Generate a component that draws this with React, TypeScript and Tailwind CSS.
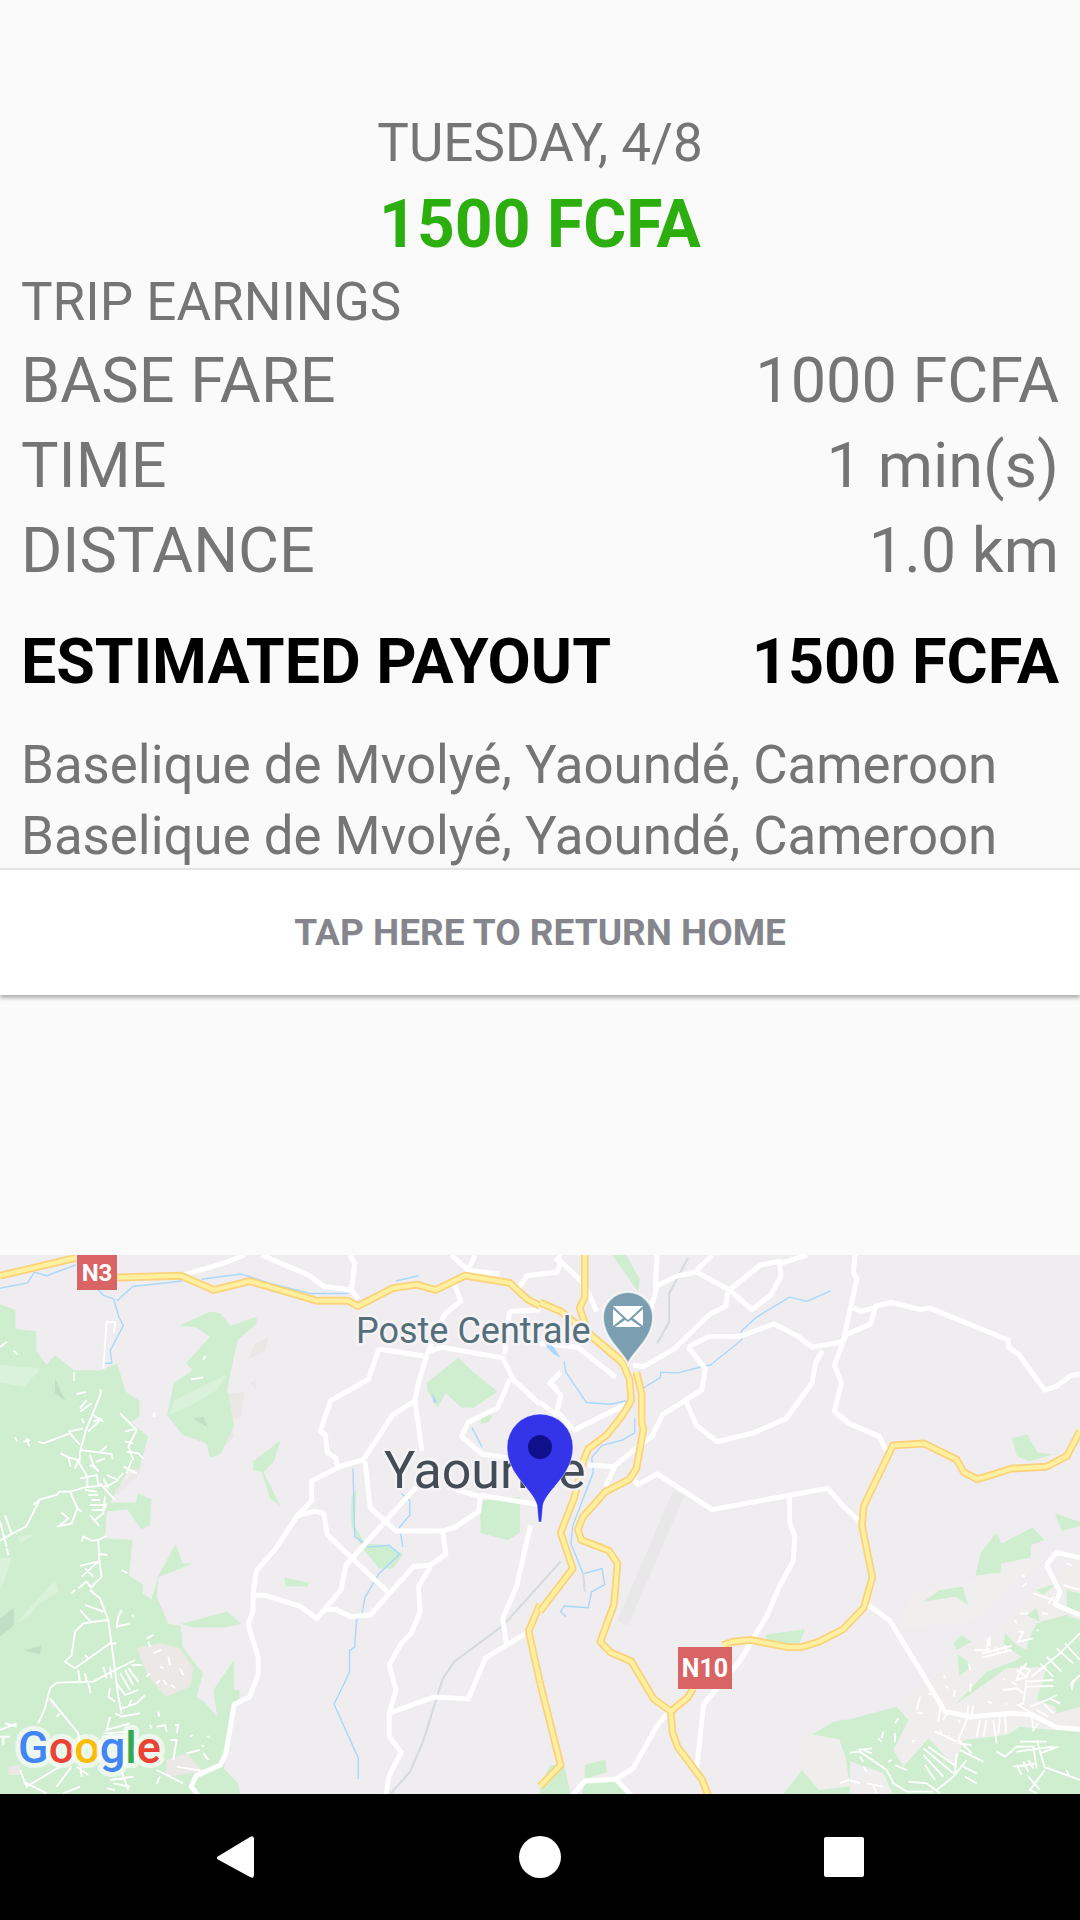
const leftGreen = [
  "M0,180 L45,195 L45,250 L105,255 L105,310 L135,350 L160,322 L215,365 L295,365 L340,345 L365,425 L405,450 L405,495 L380,510 L430,550 L405,640 L370,650 L320,735 L395,735 L400,710 L440,725 L435,800 L410,810 L370,755 L310,760 L305,835 L385,840 L375,940 L415,965 L415,990 L440,1005 L460,940 L510,850 L530,905 L560,905 L460,945 L455,1000 L490,1075 L525,1080 L530,1140 L590,1215 L570,1280 L590,1290 L630,1335 L680,1290 L650,1480 L690,1520 L700,1560 L0,1560 Z",
  "M520,240 L610,200 L640,205 L670,240 L745,215 L745,235 L690,280 L670,370 L660,420 L680,520 L640,600 L610,610 L600,570 L530,545 L485,490 L505,400 L560,365 L540,345 L610,270 L570,245 Z",
  "M735,620 L815,560 L795,620 L765,650 L815,745 L785,725 L760,650 L735,645 Z",
  "M825,945 L895,960 L895,970 L830,970 Z",
  "M525,1075 L660,1040 L700,1075 L650,1085 L560,1085 Z",
  "M620,1260 L680,1175 L680,1260 L695,1260 L695,1285 L630,1335 Z",
  "M1240,400 L1330,330 L1375,370 L1445,425 L1375,470 L1340,470 L1295,430 L1270,470 L1240,420 Z",
  "M1395,730 L1510,720 L1510,820 L1475,840 L1450,835 L1395,820 Z",
  "M1020,720 L1035,700 L1030,800 L1060,850 L1130,855 L1170,880 L1140,920 L1100,920 L1050,860 L1020,800 Z",
  "M1400,490 L1430,490 L1420,510 L1395,515 Z",
]
const leftBeige = [
  "M660,430 L710,425 L700,495 L650,510 Z",
  "M590,500 L670,520 L680,550 L640,585 L530,545 Z",
  "M740,290 L780,270 L770,310 L720,335 Z",
  "M725,400 L743,390 L743,420 Z",
]
const leftDark = [
  "M0,1060 L40,1030 L40,1080 L0,1110 Z",
  "M160,390 L190,450 L160,430 Z",
  "M70,1150 L120,1135 L115,1160 Z",
  "M560,500 L590,495 L605,525 Z",
]
const leftLight = [
  "M490,490 L505,450 L660,375 L630,420 L560,460 Z",
  "M0,350 L120,360 L70,410 L0,400 Z",
  "M50,1070 L160,950 L170,985 L110,1020 L80,1060 Z",
  "M0,890 L35,890 L10,960 L0,970 Z",
  "M50,830 L100,825 L60,850 Z",
]
const leftYellow = [
  "M0,100 L220,50",
  "M340,105 L525,100 L620,140 L725,115 L920,170 L1010,170 L1040,185 L1140,135 L1210,125 L1265,140 L1350,100 L1480,120 L1530,165 L1568,185",
  "M1568,1020 L1535,1095 L1568,1240",
]
const leftWhite = [
  "M525,100 L650,65 L710,42",
  "M760,42 L900,100 L940,130 L1020,140 L1040,165",
  "M1015,42 L1030,65 L1020,140",
  "M1310,42 L1360,85 L1450,95",
  "M1380,42 L1355,90",
  "M1505,135 L1530,100 L1568,95",
  "M1320,125 L1338,170 L1290,210 L1240,320 L1215,400 L1205,450 L1140,490 L1055,615 L985,635 L905,675 L905,730 L865,770 L800,865 L745,925 L735,990 L735,1040 L720,1075 L750,1170 L750,1215 L725,1280 L680,1300 L655,1440 L640,1470 L570,1500 L555,1530 L575,1555",
  "M1480,200 L1465,320",
  "M1480,200 L1568,195",
  "M1100,305 L1230,325",
  "M1100,305 L1070,390 L960,450 L930,535 L945,545 L950,595 L975,610 L980,635",
  "M1240,315 L1280,300 L1460,330 L1490,390 L1568,460",
  "M1480,390 L1445,470 L1360,510 L1340,550 L1400,600 L1470,610",
  "M1205,450 L1225,590",
  "M1060,620 L1075,750 L1150,815 L1285,815 L1295,880 L1250,910 L1200,915 L1075,1050 L1020,1055 L975,1035 L940,1035",
  "M1285,815 L1320,805 L1390,760 L1395,720 L1300,690",
  "M1395,715 L1560,740",
  "M1210,690 L1005,910 L990,980 L920,1060 L870,1025 L770,995 L735,995",
  "M865,770 L915,760 L940,765 L950,825 L1125,985",
  "M1250,915 L1215,970 L1220,1040 L1195,1100 L1165,1130 L1130,1190 L1150,1260 L1130,1325 L1130,1390 L1165,1435 L1130,1500 L1120,1555",
  "M1130,1325 L1260,1280 L1360,1285 L1410,1170 L1530,1100",
  "M1540,800 L1500,970 L1460,1060 L1470,1130",
]
const leftThin = [
  "M310,230 L335,230 L330,260 M310,225 L300,360",
  "M555,390 L590,385 M590,335 L597,325 M215,370 L215,395 M445,485 L450,495",
  "M0,300 L20,285 M40,310 L50,320",
]
const leftBlue = [
  "M0,135 L80,120 L100,90 L135,100 L220,70",
  "M285,140 L300,155 L330,165 L345,215 L358,240 L320,310 L325,345 L305,345",
  "M340,170 L385,130 L530,115",
  "M585,110 L700,95 L780,120 L900,150 L1010,150",
  "M1150,115 L1215,100",
  "M1025,640 L1030,830 L1070,860 L1130,855 L1160,880 L1100,935 L1060,1000 L1050,1050 L1035,1065 L1030,1140 L1015,1150 L1015,1210 L970,1300 L1040,1450 L1040,1510",
  "M1165,710 L1190,730 L1190,770 L1160,805 L1170,860",
  "M1370,525 L1400,580",
]

const rightGreen = [
  "M210,42 L250,42 L290,110 L285,145 L260,110 Z",
  "M1370,555 L1415,545 L1445,595 L1490,600 L1420,620 L1385,605 Z",
  "M1495,765 L1568,790 L1568,800 L1515,815 Z",
  "M1265,940 L1280,875 L1325,820 L1340,850 L1430,805 L1465,840 L1425,855 L1425,890 L1340,905 L1335,930 Z",
  "M655,1105 L770,1090 L750,1135 L655,1120 Z",
  "M130,1470 L190,1455 L195,1490 L130,1510 Z",
  "M0,1530 L30,1470 L70,1470 L90,1560 L0,1560 Z",
  "M130,1520 L220,1515 L270,1560 L120,1560 Z",
  "M880,1343 L850,1350 L790,1385 L880,1400 L900,1530 L810,1540 L760,1485 L700,1560 L900,1560 L900,1345 Z",
]
const rightYellow = [
  "M130,42 L130,160 L115,190 L140,260 L240,340",
  "M0,175 L60,200 L150,270 L240,345 L260,390 L265,450 L240,490 L195,545 L140,585 L125,620 L100,720 L60,820 L95,920 L0,1040",
  "M280,370 L295,430 L295,510 L300,530 L280,640 L260,670 L190,705 L125,775 L110,810 L120,840 L200,870 L225,905 L215,1020 L175,1125 L205,1155 L265,1180 L330,1285 L380,1320 L385,1380 L400,1420 L470,1510 L490,1560",
  "M0,1240 L60,1470 L0,1530",
  "M380,1320 L430,1280 L445,1255",
  "M530,1135 L560,1125 L610,1120 L720,1140 L760,1140 L810,1125 L880,1090 L940,1030 L965,945 L935,800 L940,745 L1025,575 L1115,570 L1210,615 L1230,650 L1270,670 L1370,640 L1470,635 L1530,605 L1568,535",
]
const rightWhite = [
  "M0,95 L50,90 L60,60 L130,125 L165,200",
  "M45,60 L60,42",
  "M340,42 L335,130 L400,100 L455,90 L550,140 L615,195 L670,155 L700,100 L695,60 L640,70 L550,140",
  "M775,42 L700,65",
  "M455,85 L500,42",
  "M340,130 L310,230",
  "M545,145 L540,185 L490,210 L390,305 L300,355 L270,350",
  "M430,300 L490,270 L580,270 L680,235 L750,270 L790,300 L880,285 L920,110 L910,90 L915,42",
  "M880,285 L890,265 L960,235 L975,185 L1020,175 L1105,195 L1130,190 L1360,280 L1360,300 L1390,320 L1465,420 L1500,410 L1540,380 L1568,375",
  "M910,190 L930,200 L970,190",
  "M880,285 L855,350 L875,400 L855,480 L900,515 L985,550 L1005,590",
  "M430,300 L480,360 L470,420 L355,490 L325,550 L270,590 L220,630 L190,690",
  "M425,455 L455,520 L515,565 L620,540 L715,500 L790,400 L800,345 L820,310",
  "M140,630 L215,635",
  "M95,535 L250,460",
  "M265,665 L285,685 L340,655 L500,755 L835,695 L880,745 L925,785",
  "M725,720 L725,790 L740,830 L735,900 L695,970 L660,1050 L620,1115 L580,1180 L475,1300 L455,1480",
  "M950,1020 L1015,1065 L1120,1230 L1175,1320 L1250,1335 L1370,1325 L1430,1330 L1500,1365 L1568,1370",
  "M375,1320 L340,1360 L270,1480 L220,1510 L130,1515 L90,1560",
  "M220,1510 L270,1560",
  "M25,395 L60,435 L50,480 L95,530",
  "M50,420 L30,400 L60,370",
  "M0,455 L50,490",
  "M0,290 L110,300 L220,385",
  "M1470,910 L1500,875 L1568,890",
  "M1470,910 L1510,985 L1495,1020 L1568,1050",
]
const rightBlue = [
  "M70,340 L75,370 L135,455 L205,460 L250,450",
  "M300,415 L350,385 L350,370 L400,372 L470,355 L495,350 L585,280 L585,255 L630,215 L725,160 L775,172 L845,142",
  "M275,500 L275,540 L240,560 L180,575 L150,610 L155,650 L95,800 L90,850 L125,935 L180,920 L188,965 L150,985 L140,1030 L70,1025 L60,1040 L75,1055",
]

// village streets, traced from 3x crops of the map
const villageNorth =
  "M230,42 L258,36 M300,28 L303,40 L258,150 L240,215 L238,250 L262,290 L262,320 M275,70 L240,95 M260,60 L240,85 M245,115 L252,130 M280,105 L310,125 M280,125 L305,115 L265,155 M115,185 L130,190 L210,160 L240,195 M205,155 L250,145 M240,210 L300,218 L335,222 L338,238 M300,218 L320,198 M182,220 L205,232 L235,240 M205,232 L212,260 M235,240 L225,265 M270,225 L280,255 L295,275 M290,245 L315,235 M270,255 L295,270 M240,295 L290,285 L295,315 L320,320 L355,300 M100,375 L120,358 L170,345 L178,335 L210,335 L255,322 L295,318 M210,335 L232,385 L215,430 M232,385 L245,395 M185,398 L205,415 L175,440 M170,440 L215,430 M255,330 L290,335 M265,345 L295,345 M275,360 L300,360 M270,375 L320,375 M275,390 L315,390 M315,350 L310,400 L285,420 M270,405 L298,438 M320,370 L315,385 M120,358 L78,440 L35,462 L0,482 M15,405 L35,462 M0,425 L20,500 M20,505 L25,525 M300,310 L345,360 M310,295 L325,325 M320,285 L355,300 M360,100 L410,150 L385,200 L400,240 M375,155 L410,145 M375,185 L400,190 M380,215 L415,220 L430,235 M370,260 L410,280 M370,280 L355,295 M395,240 L380,280 M245,485 L250,470 L275,482 L295,480 L318,468 M295,480 L298,545 L305,590 L275,620 M298,522 L322,525 M240,558 L270,550 L295,545 L245,590 M255,565 L280,590 M235,625 L260,605 L275,625 M45,172 L52,185 M70,185 L90,180 M80,175 L88,198 M365,570 L382,580 M460,110 L465,98"
const villageSouth =
  "M215,10 L225,0 M270,0 L300,25 L325,90 L345,240 L355,320 L365,370 M255,45 L310,65 M240,60 L272,95 M225,125 L250,100 L322,90 M225,125 L215,195 L195,215 L225,235 M225,235 L330,160 L350,160 M255,195 L265,205 M235,240 L240,280 M255,250 L260,275 M265,280 L272,310 M115,400 L135,355 L150,295 L170,278 L280,275 L345,240 L405,210 M150,325 L235,430 L240,470 M170,380 L180,370 M310,230 L320,265 M330,230 L335,265 M360,250 L390,300 M375,240 L400,285 M385,235 L415,275 M395,225 L425,225 M350,280 L375,315 L415,300 M330,295 L325,320 L345,335 M365,355 L410,340 L435,315 M385,350 L395,330 M345,370 L365,380 L420,370 M330,380 L320,420 L390,400 M310,430 L390,425 M305,440 L380,440 M355,80 L365,60 M355,80 L350,110 L390,100 M395,75 L402,80 M440,145 L460,135 M445,155 L450,170 M460,190 L485,178 M505,200 L510,225 M540,235 L550,255 M440,260 L450,250 M470,280 L480,270 M490,270 L500,285 M515,285 L525,295 M480,230 L490,235 M475,365 L478,380 M450,405 L455,415 M470,410 L495,405 L500,425 M525,405 L535,405 L530,430 M570,440 L580,435 M620,440 L630,440 M605,465 L612,470 M0,420 L50,400 M15,400 L50,410 M0,440 L30,440 M10,440 L10,465 M510,450 L530,450 L520,510 M560,490 L600,480 M610,490 L625,510 M530,530 L620,545 M470,540 L550,580 M480,560 L470,580 M60,540 L80,590 L180,530 M70,575 L140,610 M170,590 L215,530 M230,530 L265,555 M240,520 L245,560 M190,610 L240,590 M330,570 L400,560 M340,580 L390,590 M365,545 L385,600 M320,595 L345,600"
const villageEast =
  "M405,270 L440,270 L445,235 M425,280 L515,258 M425,293 L515,270 M445,265 L450,280 M470,262 L475,280 M495,255 L500,270 M535,215 L550,215 L535,245 L580,235 M540,160 L565,160 M605,160 L625,162 M590,210 L595,212 M525,180 L530,190 M545,45 L555,50 M548,80 L560,70 M680,10 L695,15 M580,100 L640,120 M625,130 L640,110 M670,75 L720,90 M530,330 L560,350 L530,360 L545,320 L570,330 L555,355 M560,310 L535,340 M560,380 L640,378 M560,365 L640,360 M560,360 L550,430 L535,435 L575,460 L580,510 L595,490 M490,390 L530,385 L550,400 M515,365 L530,375 M490,355 L495,360 M575,350 L660,280 L720,220 M600,310 L640,350 M620,290 L665,335 M650,265 L700,310 M675,250 L720,300 M690,375 L720,345 M700,360 L695,390 M570,440 L620,420 L650,405 M590,450 L625,470 M610,430 L640,460 M630,415 L660,430 M300,445 L295,485 M320,460 L310,480 M385,435 L380,480 M400,438 L392,480 M355,480 L360,490 M420,480 L410,530 M440,480 L430,530 M460,480 L470,550 M480,470 L475,520 M495,465 L498,520 M380,480 L355,540 L395,580 M285,515 L350,545 M300,510 L305,525 M325,525 L325,535 M355,550 L395,555 M360,570 L430,605 M350,580 L345,640 M380,600 L340,650 L290,690 M370,620 L410,640 M375,650 L410,670 M250,565 L340,640 M265,560 L350,620 M250,585 L310,650 M255,615 L285,660 M205,665 L260,670 L300,700 M470,575 L495,590 L530,560 L580,560 L590,625 M540,545 L620,545 M530,575 L640,560 M520,620 L590,610 M530,615 L545,645 M550,605 L565,635 M565,600 L580,625 M590,540 L615,625 M600,580 L655,560 M610,620 L720,660 M615,630 L570,690 L590,700 M565,650 L600,690 M680,630 L685,645 M30,578 L60,575 L140,630 L160,670 L200,695 L280,695 M55,570 L95,565 M70,570 L95,580 M60,590 L70,605 M70,620 L80,635 M0,670 L25,660 L60,670 M80,670 L130,680 M100,680 L110,700 M165,490 L175,475 M130,515 L125,535 M115,535 L125,545 M165,520 L165,545 M215,545 L225,540 M145,605 L155,600 M165,615 L200,630 M240,410 L230,450 M230,458 L250,460 M265,400 L275,405 M315,345 L312,355 M315,378 L325,385 M345,390 L342,410 M393,370 L390,395 M445,425 L455,430 M498,435 L500,430 M385,310 L392,330 M450,230 L448,260"

const eastBeige = [
  "M170,440 L320,320 L470,210 L620,60 L720,0 L720,705 L0,705 L0,690 L140,620 L170,570 L210,480 Z",
]
const eastPale = ["M180,210 L220,95 L300,85 L380,70 L540,0 L610,0 L400,180 L340,190 Z"]
const eastGreen = [
  "M0,485 L170,440 L205,480 L160,570 L190,620 L265,535 L345,620 L370,540 L500,525 L540,500 L640,510 L720,510 L720,705 L460,705 L460,650 L530,660 L560,705 L160,705 L130,640 L20,600 L0,545 Z",
  "M250,125 L300,90 L368,80 L385,135 L345,110 Z",
  "M405,40 L425,0 L485,0 L480,40 Z",
  "M340,250 L365,225 L395,245 L350,270 Z",
  "M352,282 L390,310 L388,325 L358,348 Z",
  "M345,435 L440,335 L530,300 L545,290 L490,255 L495,220 L530,255 L560,270 L565,240 L590,190 L605,188 L560,165 L590,145 L600,185 L680,165 L720,180 L720,440 L650,460 L645,440 L590,420 L620,320 L500,325 Z",
  "M590,90 L650,70 L610,105 Z",
  "M680,90 L720,100 L720,160 L680,140 Z",
]

function Shapes({ paths, fill }: { paths: string[]; fill: string }) {
  return (
    <g fill={fill}>
      {paths.map((d, i) => <path key={i} d={d} />)}
    </g>
  )
}

function Lines({ paths, color, width }: { paths: string[]; color: string; width: number }) {
  return (
    <g fill="none" stroke={color} strokeWidth={width} strokeLinejoin="round" strokeLinecap="butt">
      {paths.map((d, i) => <path key={i} d={d} />)}
    </g>
  )
}

function MapView() {
  return (
    <svg className="block w-[1080px] h-[539px]" viewBox="0 1255 1080 539">
      <rect x="0" y="1255" width="1080" height="539" fill="#f0edf0" />

      <g transform="translate(540,1240) scale(0.3444,0.3571)">
        <path d="M760,1400 L790,1385 L880,1400 L900,1530 L810,1540 L760,1485 Z" fill="#f0eeec" />
      </g>
      <g transform="translate(840,1560) scale(0.3333)">
        <Shapes paths={eastBeige} fill="#f0eeec" />
        <Shapes paths={eastPale} fill="#f1efee" />
        <Shapes paths={eastGreen} fill="#cfeed0" />
      </g>

      <g transform="translate(0,1240) scale(0.3444,0.3571)">
        <Shapes paths={leftBeige} fill="#ebe7e5" />
        <Shapes paths={leftGreen} fill="#cfeed0" />
        <Shapes paths={leftLight} fill="#d9f2d9" />
        <Shapes paths={leftDark} fill="#bfe0c4" />
      </g>

      <g transform="translate(0,1590) scale(0.3333)">
        <path d="M410,175 L480,160 L540,175 L580,235 L570,290 L500,320 L470,290 L440,250 Z" fill="#ebe8e5" />
        <path d="M25,530 L60,525 L60,555 L25,555 Z M500,510 L560,490 L610,545 L500,560 Z M140,325 L170,345 L160,355 Z" fill="#ebe8e5" />
      </g>
      <g transform="translate(0,1380) scale(0.3333)">
        <path d="M345,330 L410,270 L440,240 L410,290 L350,345 Z" fill="#ebe8e5" />
      </g>

      <g transform="translate(0,1240) scale(0.3444,0.3571)">
        <Lines paths={leftBlue} color="#a8d8fb" width={4} />
        <Lines paths={["M1568,965 L1460,1080 L1320,1180 L1285,1230 L1230,1400 L1190,1490 L1130,1555"]} color="#d5dbdc" width={6} />
        <Lines paths={leftThin} color="#ffffff" width={5} />
        <Lines paths={leftWhite} color="#ffffff" width={14} />
        <Lines paths={leftYellow} color="#fbd27a" width={22} />
        <Lines paths={leftYellow} color="#fff0a0" width={12} />
        <path d="M1255,430 L1270,455 L1258,455 Z" fill="#a8d8fb" />
      </g>

      <g transform="translate(540,1240) scale(0.3444,0.3571)">
        <Shapes paths={rightGreen} fill="#cfeed0" />
        <path d="M385,705 L420,715 L255,1080 L225,1065 Z" fill="#e8e8e8" />
        <Lines paths={rightBlue} color="#a8d8fb" width={4} />
        <Lines paths={["M430,50 L375,150 L375,230 L340,290", "M60,900 L0,965", "M125,930 L130,985"]} color="#d5dbdc" width={6} />
        <Lines paths={rightWhite} color="#ffffff" width={14} />
        <Lines paths={rightYellow} color="#fbd27a" width={22} />
        <Lines paths={rightYellow} color="#fff0a0" width={12} />
        <path d="M15,280 L40,300 L60,330 L40,320 L20,300 Z" fill="#a8d8fb" />
      </g>

      <g fill="none" stroke="#ffffff" strokeWidth="5.5">
        <path transform="translate(0,1380) scale(0.3333)" d={villageNorth} />
        <path transform="translate(0,1590) scale(0.3333)" d={villageSouth} />
        <path transform="translate(840,1560) scale(0.3333)" d={villageEast} />
      </g>

      <rect x="77" y="1255" width="40" height="35" fill="#d96466" />
      <text x="97" y="1281" textAnchor="middle" fontFamily="Roboto, sans-serif" fontWeight="700" fontSize="24" fill="#ffffff">N3</text>
      <rect x="678" y="1647" width="54" height="42" fill="#d96466" />
      <text x="705" y="1677" textAnchor="middle" fontFamily="Roboto, sans-serif" fontWeight="700" fontSize="25" fill="#ffffff">N10</text>

      <text x="356" y="1343" fontFamily="Roboto, sans-serif" fontSize="36" fill="#546e7a" stroke="#f5f3f5" strokeWidth="5" paintOrder="stroke" strokeLinejoin="round">Poste Centrale</text>
      <path d="M628,1364 C624,1352 603,1340 603,1317 A25,25 0 0 1 653,1317 C653,1340 632,1352 628,1364 Z" fill="#7b9eb0" stroke="#ffffff" strokeOpacity="0.7" strokeWidth="2" />
      <path d="M613,1306 L643,1306 L628,1320 Z M613,1309 L623,1318 L613,1326 Z M643,1309 L633,1318 L643,1326 Z M615,1327 L625,1320 L628,1322 L631,1320 L641,1327 Z" fill="#ffffff" />

      <text x="384" y="1488" fontFamily="Roboto, sans-serif" fontSize="52" fill="#444c55" stroke="#f5f3f5" strokeWidth="5" paintOrder="stroke" strokeLinejoin="round">Yaounde</text>
      <path d="M538.5,1522 L537,1505 C532,1488 507,1475 507,1447 A33,33 0 0 1 573,1447 C573,1475 548,1488 543,1505 L541.5,1522 Z" fill="#3434e8" stroke="#ffffff" strokeOpacity="0.5" strokeWidth="1" />
      <circle cx="540" cy="1447" r="12" fill="#10108a" />

      <text x="18" y="1763" fontFamily="Roboto, sans-serif" fontSize="45" fontWeight="500" stroke="#ffffff" strokeOpacity="0.6" strokeWidth="10" paintOrder="stroke" strokeLinejoin="round">
        <tspan fill="#4285f4">G</tspan>
        <tspan fill="#ea4335">o</tspan>
        <tspan fill="#fbbc05">o</tspan>
        <tspan fill="#4285f4">g</tspan>
        <tspan fill="#34a853">l</tspan>
        <tspan fill="#ea4335">e</tspan>
      </text>
    </svg>
  )
}

function FareRow({ label, value }: { label: string; value: string }) {
  return (
    <div className="flex justify-between h-[85px] items-center text-[63px] leading-[70px] text-[#757575]">
      <span>{label}</span>
      <span>{value}</span>
    </div>
  )
}

function NavBar() {
  return (
    <div className="flex h-[126px] items-center justify-center gap-[240px] bg-black">
      <svg className="w-[64px] h-[64px]" viewBox="0 0 64 64">
        <path d="M13,32 L46,12 Q50,10 50,14 L50,50 Q50,54 46,52 L13,34 Z" fill="#ffffff" />
      </svg>
      <div className="w-[64px] flex justify-center">
        <div className="w-[42px] h-[42px] rounded-full bg-white" />
      </div>
      <div className="w-[64px] flex justify-center">
        <div className="w-[40px] h-[40px] rounded-[2px] bg-white" />
      </div>
    </div>
  )
}

export default function App() {
  return (
    <div className="flex flex-col w-[1080px] h-[1920px] bg-[#fafafa] font-['Roboto',sans-serif]">
      <div className="pt-[115px] px-[21px]">
        <div className="text-center text-[53px] leading-[56px] text-[#757575]">TUESDAY, 4/8</div>
        <div className="text-center text-[66px] leading-[70px] mt-[19px] font-bold text-[#2bae0e]">1500 FCFA</div>
        <div className="text-[53px] leading-[56px] mt-[14px] text-[#757575]">TRIP EARNINGS</div>
        <div className="mt-[8px]">
          <FareRow label="BASE FARE" value="1000 FCFA" />
          <FareRow label="TIME" value="1 min(s)" />
          <FareRow label="DISTANCE" value="1.0 km" />
        </div>
        <div className="flex justify-between mt-[34px] text-[63px] leading-[70px] font-bold text-black">
          <span className="text-[62.7px]">ESTIMATED PAYOUT</span>
          <span>1500 FCFA</span>
        </div>
        <div className="mt-[33px] h-[138px] text-[52.8px] leading-[71px] text-[#757575]">
          <div>Baselique de Mvolyé, Yaoundé, Cameroon</div>
          <div>Baselique de Mvolyé, Yaoundé, Cameroon</div>
        </div>
      </div>
      <div className="flex items-center justify-center h-[127px] bg-white border-t-2 border-[#e4e4e4] shadow-[0_3px_4px_rgba(0,0,0,0.3)] text-[37px] font-bold text-[#85868d]">
        TAP HERE TO RETURN HOME
      </div>
      <div className="mt-auto">
        <MapView />
      </div>
      <NavBar />
    </div>
  )
}
